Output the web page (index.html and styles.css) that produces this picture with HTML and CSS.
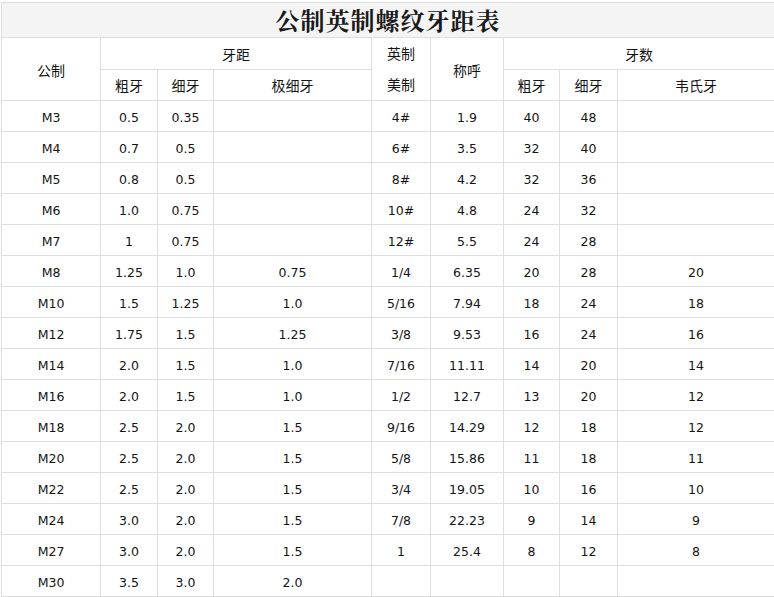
FILE: index.html
```html
<!DOCTYPE html>
<html lang="zh">
<head>
<meta charset="utf-8">
<title>公制英制螺纹牙距表</title>
<link rel="stylesheet" href="styles.css">
</head>
<body>
<table class="thread">
<colgroup>
<col class="c1"><col class="c2"><col class="c3"><col class="c4"><col class="c5"><col class="c6"><col class="c7"><col class="c8"><col class="c9">
</colgroup>
<thead>
<tr class="title-row"><th colspan="9" class="title">公制英制螺纹牙距表</th></tr>
<tr class="hrow">
<th rowspan="2" class="hd">公制</th>
<th colspan="3" class="hd">牙距</th>
<th rowspan="2" class="hd two">英制<br>美制</th>
<th rowspan="2" class="hd">称呼</th>
<th colspan="3" class="hd">牙数</th>
</tr>
<tr class="hrow">
<th class="hd">粗牙</th><th class="hd">细牙</th><th class="hd">极细牙</th>
<th class="hd">粗牙</th><th class="hd">细牙</th><th class="hd">韦氏牙</th>
</tr>
</thead>
<tbody>
<tr><td>M3</td><td>0.5</td><td>0.35</td><td></td><td>4#</td><td>1.9</td><td>40</td><td>48</td><td></td></tr>
<tr><td>M4</td><td>0.7</td><td>0.5</td><td></td><td>6#</td><td>3.5</td><td>32</td><td>40</td><td></td></tr>
<tr><td>M5</td><td>0.8</td><td>0.5</td><td></td><td>8#</td><td>4.2</td><td>32</td><td>36</td><td></td></tr>
<tr><td>M6</td><td>1.0</td><td>0.75</td><td></td><td>10#</td><td>4.8</td><td>24</td><td>32</td><td></td></tr>
<tr><td>M7</td><td>1</td><td>0.75</td><td></td><td>12#</td><td>5.5</td><td>24</td><td>28</td><td></td></tr>
<tr><td>M8</td><td>1.25</td><td>1.0</td><td>0.75</td><td>1/4</td><td>6.35</td><td>20</td><td>28</td><td>20</td></tr>
<tr><td>M10</td><td>1.5</td><td>1.25</td><td>1.0</td><td>5/16</td><td>7.94</td><td>18</td><td>24</td><td>18</td></tr>
<tr><td>M12</td><td>1.75</td><td>1.5</td><td>1.25</td><td>3/8</td><td>9.53</td><td>16</td><td>24</td><td>16</td></tr>
<tr><td>M14</td><td>2.0</td><td>1.5</td><td>1.0</td><td>7/16</td><td>11.11</td><td>14</td><td>20</td><td>14</td></tr>
<tr><td>M16</td><td>2.0</td><td>1.5</td><td>1.0</td><td>1/2</td><td>12.7</td><td>13</td><td>20</td><td>12</td></tr>
<tr><td>M18</td><td>2.5</td><td>2.0</td><td>1.5</td><td>9/16</td><td>14.29</td><td>12</td><td>18</td><td>12</td></tr>
<tr><td>M20</td><td>2.5</td><td>2.0</td><td>1.5</td><td>5/8</td><td>15.86</td><td>11</td><td>18</td><td>11</td></tr>
<tr><td>M22</td><td>2.5</td><td>2.0</td><td>1.5</td><td>3/4</td><td>19.05</td><td>10</td><td>16</td><td>10</td></tr>
<tr><td>M24</td><td>3.0</td><td>2.0</td><td>1.5</td><td>7/8</td><td>22.23</td><td>9</td><td>14</td><td>9</td></tr>
<tr><td>M27</td><td>3.0</td><td>2.0</td><td>1.5</td><td>1</td><td>25.4</td><td>8</td><td>12</td><td>8</td></tr>
<tr><td>M30</td><td>3.5</td><td>3.0</td><td>2.0</td><td></td><td></td><td></td><td></td><td></td></tr>
</tbody>
</table>
</body>
</html>
```
FILE: styles.css
```css
html, body {
  margin: 0;
  padding: 0;
  background: #ffffff;
  overflow: hidden;
}
body {
  padding: 2px 0 0 1px;
  font-family: "DejaVu Sans", "Noto Sans CJK SC", sans-serif;
  color: #141414;
}
.thread {
  border-collapse: collapse;
  table-layout: fixed;
  width: 774px;
}
.c1 { width: 99px; }
.c2 { width: 57px; }
.c3 { width: 56px; }
.c4 { width: 158px; }
.c5 { width: 59px; }
.c6 { width: 73px; }
.c7 { width: 56px; }
.c8 { width: 58px; }
.c9 { width: 157px; }
.thread th,
.thread td {
  border: 1px solid #dedede;
  padding: 2px 0 0 0;
  text-align: center;
  vertical-align: middle;
  font-weight: normal;
}
.thread td {
  font-size: 12.5px;
  height: 28px;
}
.thread .title {
  height: 34px;
  line-height: 26px;
  background: #f4f4f4;
  font-family: "Noto Serif CJK SC", "Noto Sans CJK SC", serif;
  font-weight: bold;
  font-size: 24px;
  letter-spacing: 1px;
  color: #1a1a1a;
  padding: 0;
}
.thread .hd {
  font-family: "Noto Sans CJK SC", sans-serif;
  font-size: 14px;
  height: 29px;
  line-height: 20px;
  padding-top: 1px;
}
.thread .hd.two {
  line-height: 31px;
  padding-top: 0;
}
```
